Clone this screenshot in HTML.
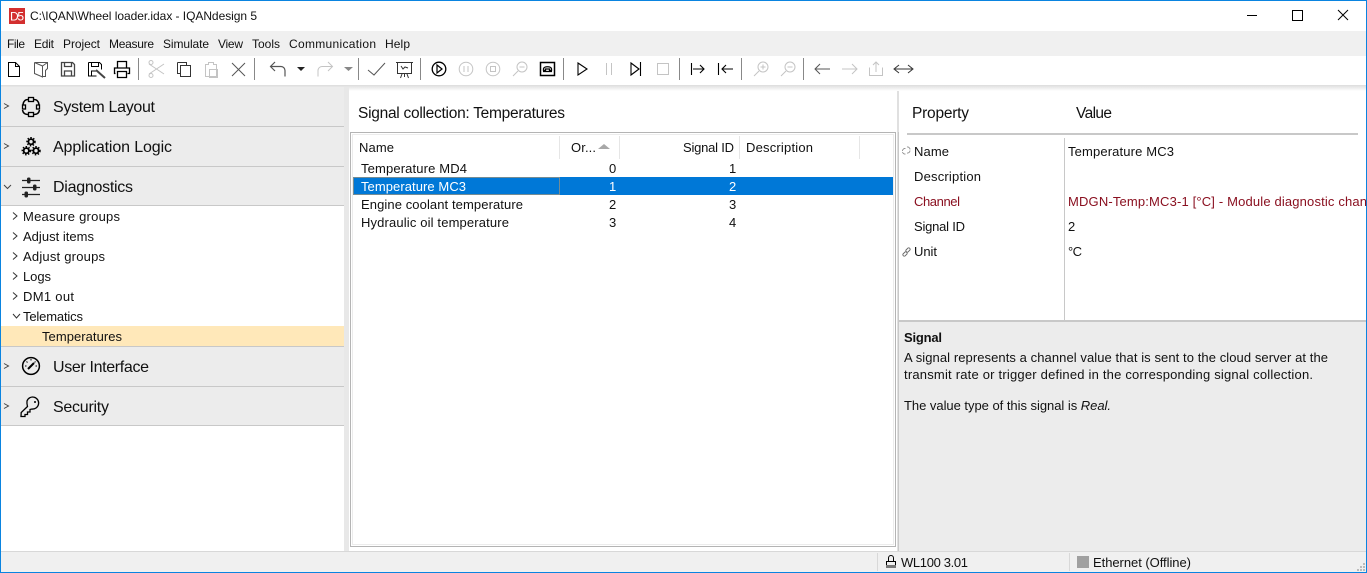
<!DOCTYPE html>
<html><head><meta charset="utf-8"><title>IQANdesign 5</title>
<style>
html,body{margin:0;padding:0;width:1367px;height:573px;overflow:hidden;background:#fff}
svg{display:block}
text{font-family:"Liberation Sans",sans-serif;font-size:13px;fill:#111}
.s{font-size:12px}
.h{font-size:16px}
.m{font-size:15.5px}
.g{fill:none;stroke:#000;stroke-width:1}
.d{fill:none;stroke:#c4c4c4;stroke-width:1}
.k{fill:none;stroke:#555;stroke-width:1}
</style></head><body>
<svg width="1367" height="573" viewBox="0 0 1367 573" xmlns="http://www.w3.org/2000/svg">
<defs><linearGradient id="sh" x1="0" y1="0" x2="0" y2="1"><stop offset="0" stop-color="#dcdcdc"/><stop offset="1" stop-color="#fff"/></linearGradient></defs>
<rect width="1367" height="573" fill="#fff"/>
<!-- menu bar -->
<rect y="31" width="1367" height="25" fill="#f0f0f0"/>
<!-- shadow -->
<rect y="85" width="1367" height="6" fill="url(#sh)"/>
<!-- left panel -->
<rect x="1" y="87" width="343" height="464" fill="#ececec"/>
<rect x="1" y="206" width="343" height="140" fill="#fff"/>
<rect x="1" y="326" width="343" height="20" fill="#ffe8b9"/>
<rect x="1" y="426" width="343" height="125" fill="#fff"/>
<g fill="#c8c8c8">
<rect x="1" y="126" width="343" height="1"/><rect x="1" y="166" width="343" height="1"/><rect x="1" y="205" width="343" height="1"/>
<rect x="1" y="346" width="343" height="1"/><rect x="1" y="386" width="343" height="1"/><rect x="1" y="425" width="343" height="1"/>
</g>
<rect x="344" y="87" width="5" height="464" fill="#e8e8e8"/>
<!-- center list -->
<rect x="350.500" y="132.500" width="545" height="414" fill="#fff" stroke="#b4b4b4"/>
<rect x="352.500" y="134.500" width="541" height="410" fill="#fff" stroke="#ececec"/>
<rect x="353" y="177" width="540" height="18" fill="#0078d7"/>
<rect x="353.500" y="177.500" width="206" height="17" fill="none" stroke="#e8a050" stroke-dasharray="1 1"/>
<g fill="#e6e6e6"><rect x="559" y="136" width="1" height="23"/><rect x="619" y="136" width="1" height="23"/><rect x="739" y="136" width="1" height="23"/><rect x="859" y="136" width="1" height="23"/></g>
<path d="M598 149 L604 144 L610 149 Z" fill="#a8a8a8"/>
<!-- right panel -->
<rect x="897" y="91" width="2" height="460" fill="#e0e0e0"/>
<rect x="898" y="132" width="1" height="419" fill="#c8c8c8"/>
<rect x="899" y="322" width="468" height="229" fill="#ececec"/>
<rect x="899" y="320" width="468" height="2" fill="#c8c8c8"/>
<rect x="907" y="133" width="451" height="2" fill="#c8c8c8"/>
<rect x="1064" y="138" width="1" height="182" fill="#c8c8c8"/>
<!-- status -->
<rect x="0" y="551" width="1367" height="21" fill="#f0f0f0"/>
<rect x="0" y="551" width="1367" height="1" fill="#d8d8d8"/>
<rect x="877" y="553" width="1" height="18" fill="#d8d8d8"/>
<rect x="1069" y="553" width="1" height="18" fill="#d8d8d8"/>
<rect x="1077" y="556" width="12" height="12" fill="#a0a0a0"/>
<path d="M886.500 561.500h9v6h-9z" class="g"/><rect x="886" y="565" width="10" height="3" fill="#777"/>
<path d="M888.500 561v-3a2.500 2.500 0 0 1 5 0v3" class="g"/>
<g fill="#bbb"><rect x="1363" y="563" width="2" height="2"/><rect x="1360" y="566" width="2" height="2"/><rect x="1363" y="566" width="2" height="2"/><rect x="1357" y="569" width="2" height="2"/><rect x="1360" y="569" width="2" height="2"/><rect x="1363" y="569" width="2" height="2"/></g>
<!-- window border -->
<rect x="0" y="0" width="1367" height="1" fill="#0a84e0"/>
<rect x="0" y="0" width="1" height="573" fill="#0a84e0"/>
<rect x="1366" y="0" width="1" height="573" fill="#0a84e0"/>
<rect x="0" y="572" width="1367" height="1" fill="#0a84e0"/>

<!-- title -->
<rect x="9" y="8" width="16" height="16" fill="#d32f2f"/>
<text x="10" y="20.500" style="fill:#fff;font-size:12px" textLength="14">D5</text>
<text class="s" x="30" y="20" textLength="227">C:\IQAN\Wheel loader.idax - IQANdesign 5</text>
<path d="M1247 15.500h10" class="g"/><rect x="1292.500" y="10.500" width="10" height="10" class="g"/><path d="M1338 10l10 10M1348 10l-10 10" class="g"/>
<!-- menu -->
<text class="s" x="7" y="48" textLength="18">File</text>
<text class="s" x="34" y="48" textLength="20">Edit</text>
<text class="s" x="63" y="48" textLength="37">Project</text>
<text class="s" x="109" y="48" textLength="45">Measure</text>
<text class="s" x="163" y="48" textLength="46">Simulate</text>
<text class="s" x="218" y="48" textLength="25">View</text>
<text class="s" x="252" y="48" textLength="28">Tools</text>
<text class="s" x="289" y="48" textLength="87">Communication</text>
<text class="s" x="385" y="48" textLength="25">Help</text>

<!-- toolbar separators -->
<g fill="#888"><rect x="138" y="58" width="1" height="22"/><rect x="254" y="58" width="1" height="22"/><rect x="358" y="58" width="1" height="22"/><rect x="420" y="58" width="1" height="22"/><rect x="563" y="58" width="1" height="22"/><rect x="679" y="58" width="1" height="22"/><rect x="741" y="58" width="1" height="22"/><rect x="803" y="58" width="1" height="22"/></g>
<!-- toolbar icons -->
<path class="g" d="M8.500 62.500h7l4 4v10h-11zM15.500 62.500v4h4"/>
<path class="k" stroke="#333" d="M34.500 62.500h13v6l-2 2v6h-3M34.500 62.500v11l8 3.500v-11l-8-3.500M47.500 62.500l-5 3.500"/>
<path class="k" stroke-width="1.300" style="stroke:#444;stroke-width:1.300" d="M61.500 62.500h11l2 2v11.500h-13zM64.500 62.500v4h7v-4M64.500 76v-5h7v5"/>
<path class="g" d="M88.500 62.500h11l2 2v5M88.500 62.500v13.500h8M91.500 62.500v4h7v-4M91.500 76v-5h5"/>
<path d="M96 70l9 8" fill="none" stroke="#444" stroke-width="2"/>
<path class="g" style="stroke-width:1.300" d="M117.500 68v-6.500h9v6.500M115.500 73.500h-1v-5.500h15v5.500h-2M117.500 71.500h9v6h-9z"/>
<path class="d" d="M149 64l15 10M149 74l15-10"/><circle class="d" cx="151" cy="62.500" r="2"/><circle class="d" cx="151" cy="75.500" r="2"/>
<path class="k" style="stroke:#333" d="M177.500 62.500h9v3M177.500 62.500v11h3M180.500 65.500h10v11h-10z"/>
<path class="d" d="M205.500 64.500h3v-2h5v2h3v12h-11zM209.500 69.500h8v8h-8z"/>
<path class="k" d="M232 63l13 13M245 63l-13 13"/>
<path class="k" style="stroke-width:1.200" d="M271 66.500h10a4 4 0 0 1 4 4v6M275 62l-4.500 4.500 4.500 4.500"/>
<path d="M297 67h8l-4 4z" fill="#222"/>
<path class="d" d="M332 66.500h-10a4 4 0 0 0-4 4v6M328 62l4.500 4.500-4.500 4.500"/>
<path d="M344 67h9l-4.500 4z" fill="#888"/>
<path class="k" d="M368 70l6 5 11-12"/>
<path class="k" style="stroke:#333" d="M397.500 62.500h14v11h-14zM396 62.500h17M401 66l2 3 2-2 3 1M402 74l-1.500 4M407 74l1.500 4M404.500 74v3"/>
<circle class="g" style="stroke-width:1.300" cx="439" cy="69" r="6.800"/><path class="g" style="stroke-width:1.200" d="M437 65l5 4-5 4z"/>
<circle class="d" cx="466" cy="69" r="6.800"/><path class="d" d="M464 66v6M468 66v6"/>
<circle class="d" cx="493" cy="69" r="6.800"/><rect class="d" x="490.500" y="66.500" width="5" height="5"/>
<circle class="d" cx="522" cy="67" r="5"/><path class="d" d="M518 71l-5 5M519.500 67h5"/>
<rect class="g" style="stroke-width:1.500" x="540.500" y="62.500" width="14" height="13"/><path class="g" style="stroke-width:1.300" d="M543.500 69c0-3 8-3 8 0v1.500h-2v-1.500h-4v1.500h-2zM543 71.500h9"/>
<path class="g" style="stroke-width:1.100" d="M578 63l9 6-9 6z"/>
<path class="d" d="M606.500 63v12M611.500 63v12"/>
<path class="g" style="stroke-width:1.100" d="M631 63l8 6-8 6zM640.500 62v14"/>
<rect class="d" x="657.500" y="63.500" width="11" height="11"/>
<path class="g" style="stroke-width:1.100" d="M691.500 63v12M693 69h11M700 65l4 4-4 4"/>
<path class="g" style="stroke-width:1.100" d="M718.500 63v12M733 69h-11M726 65l-4 4 4 4"/>
<circle class="d" cx="763" cy="67" r="5"/><path class="d" d="M759 71l-5 5M760.500 67h5M763 64.500v5"/>
<circle class="d" cx="790" cy="67" r="5"/><path class="d" d="M786 71l-5 5M787.500 67h5"/>
<path class="k" d="M815 69h15M820 64l-5 5 5 5"/>
<path class="d" d="M842 69h15M852 64l5 5-5 5"/>
<path class="d" d="M869.500 67.500v8h13v-8M876 72v-10M873 65l3-3 3 3"/>
<path class="k" style="stroke:#333" d="M895 69h17M899 65l-5 4 5 4M908 65l5 4-5 4"/>

<!-- sections -->
<path fill="none" stroke="#444" d="M4 103.500l4.500 2.500-4.500 2.500M4 143.500l4.500 2.500-4.500 2.500M4 185l3.500 3.500 3.500-3.500M4 363.500l4.500 2.500-4.500 2.500M4 403.500l4.500 2.500-4.500 2.500"/>
<text class="h" x="53" y="112" textLength="102">System Layout</text>
<text class="h" x="53" y="152" textLength="119">Application Logic</text>
<text class="h" x="53" y="192" textLength="80">Diagnostics</text>
<text class="h" x="53" y="372" textLength="96">User Interface</text>
<text class="h" x="53" y="412" textLength="56">Security</text>
<!-- section icons -->
<path class="g" style="stroke-width:1.500" d="M28 99.500c-3 0-4.500 1.500-5 5M34 99.500c3 0 4.500 1.500 5 5M22.500 110c.5 3 2 4.500 5.500 4.500M39.500 110c-.5 3-2 4.500-5.500 4.500"/>
<g class="g" style="stroke-width:1.300"><rect x="28.500" y="97.500" width="5" height="4"/><rect x="28.500" y="112.500" width="5" height="4"/><rect x="22.500" y="105" width="3" height="4"/><rect x="36.500" y="105" width="3" height="4"/></g>
<g class="g" style="stroke-width:1.800"><circle cx="31" cy="141.700" r="2.600"/><circle cx="26.300" cy="150.700" r="2.600"/><circle cx="36" cy="150.700" r="2.600"/></g>
<g class="g" style="stroke-width:1.500" stroke-dasharray="1.500 1.500"><circle cx="31" cy="141.700" r="4"/><circle cx="26.300" cy="150.700" r="4"/><circle cx="36" cy="150.700" r="4"/></g>
<g stroke="#222" stroke-width="1.200" fill="none"><path d="M22 180.500h18M22 187.500h18M22 194.500h18"/></g>
<g fill="#222"><rect x="27" y="177.500" width="3.500" height="6" rx="1.500"/><rect x="33" y="184.500" width="3.500" height="6" rx="1.500"/><rect x="24.500" y="191.500" width="3.500" height="6" rx="1.500"/></g>
<circle class="g" style="stroke-width:1.500" cx="31" cy="366" r="8.400"/><path d="M28 369l6-6" stroke="#000" stroke-width="2"/><path class="g" d="M31 359v1.500M25 366h1.500M35.500 366h1.500M26.500 361.500l1 1M35.500 361.500l-1 1"/>
<path class="g" style="stroke-width:1.300" d="M27 401a6 6 0 1 1 5 8l-2 .5v2.500h-2.500v2.500h-2.500v2h-4l.2-4 6.300-6c-.5-2-.8-3.500-.5-5.500z"/><circle cx="35" cy="402" r="1" fill="#000"/>

<!-- tree -->
<path fill="none" stroke="#333" d="M13 212.500l4 3.500-4 3.500M13 232.500l4 3.500-4 3.500M13 252.500l4 3.500-4 3.500M13 272.500l4 3.500-4 3.500M13 292.500l4 3.500-4 3.500M13 314l3.500 4 3.500-4"/>
<text x="23" y="221" textLength="97">Measure groups</text>
<text x="23" y="241" textLength="71">Adjust items</text>
<text x="23" y="261" textLength="82">Adjust groups</text>
<text x="23" y="281" textLength="28">Logs</text>
<text x="23" y="301" textLength="51">DM1 out</text>
<text x="23" y="321" textLength="60">Telematics</text>
<text x="42" y="341" textLength="80">Temperatures</text>

<!-- center -->
<text class="m" x="358" y="118" textLength="207">Signal collection: Temperatures</text>
<text x="359" y="152" textLength="35">Name</text>
<text x="571" y="152" textLength="25">Or...</text>
<text x="683" y="152" textLength="51">Signal ID</text>
<text x="746" y="152" textLength="67">Description</text>

<text x="361" y="173" textLength="106">Temperature MD4</text>
<text x="361" y="191" textLength="105" style="fill:#fff">Temperature MC3</text>
<text x="361" y="209" textLength="162">Engine coolant temperature</text>
<text x="361" y="227" textLength="148">Hydraulic oil temperature</text>
<text x="609" y="173" textLength="7">0</text><text x="729" y="173" textLength="7">1</text>
<text x="609" y="191" textLength="7" style="fill:#fff">1</text><text x="729" y="191" textLength="7" style="fill:#fff">2</text>
<text x="609" y="209" textLength="7">2</text><text x="729" y="209" textLength="7">3</text>
<text x="609" y="227" textLength="7">3</text><text x="729" y="227" textLength="7">4</text>

<!-- properties -->
<text class="m" x="912" y="118" textLength="57">Property</text>
<text class="m" x="1076" y="118" textLength="36">Value</text>
<path fill="none" stroke="#888" stroke-width=".8" d="M902.500 151a2.500 2.500 0 0 1 3-2.500M907 153a2.500 2.500 0 0 0 3-2.500M907 147a2.500 2.500 0 0 1 3 2.500M902.500 152a2.500 2.500 0 0 0 3 2"/>
<text x="914" y="156" textLength="35">Name</text>
<text x="914" y="181" textLength="67">Description</text>
<text x="914" y="206" textLength="46" style="fill:#8a1020">Channel</text>
<text x="914" y="231" textLength="51">Signal ID</text>
<path d="M903 254l2-2a1.500 1.500 0 0 1 2 2l-2 2a1.500 1.500 0 0 1-2-2zM906 250l2-2a1.500 1.500 0 0 1 2 2l-2 2a1.500 1.500 0 0 1-2-2z" fill="none" stroke="#666" stroke-width=".9"/>
<text x="914" y="256" textLength="23">Unit</text>
<text x="1068" y="156" textLength="106">Temperature MC3</text>
<text x="1068" y="206" textLength="299" style="fill:#8a1020">MDGN-Temp:MC3-1 [°C] - Module diagnostic chan</text>
<text x="1068" y="231" textLength="7">2</text>
<text x="1068" y="256" textLength="14">°C</text>
<text x="904" y="342" textLength="38" style="font-weight:bold">Signal</text>
<text x="904" y="362" textLength="424">A signal represents a channel value that is sent to the cloud server at the</text>
<text x="904" y="379" textLength="409">transmit rate or trigger defined in the corresponding signal collection.</text>
<text x="904" y="410" textLength="207">The value type of this signal is <tspan font-style="italic">Real.</tspan></text>
<!-- status text -->
<text x="901" y="567" textLength="67">WL100 3.01</text>
<text x="1093" y="567" textLength="98">Ethernet (Offline)</text>
</svg>
</body></html>
